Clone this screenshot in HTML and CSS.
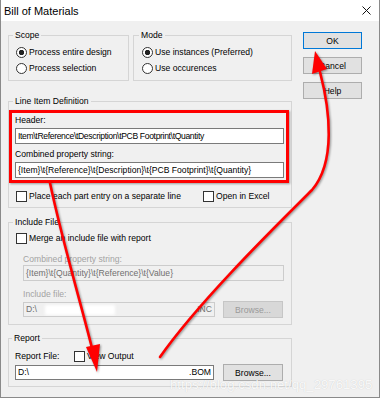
FILE: index.html
```html
<!DOCTYPE html>
<html lang="en">
<head>
    <meta charset="UTF-8">
    <title>Bill of Materials</title>
    <link rel="stylesheet" href="styles.css">
</head>
<body>

<div class="window">
    <div class="titlebar">
        <span class="title">Bill of Materials</span>
        <svg class="close" viewBox="0 0 9 9"><path d="M0.5 0.5L8.5 8.5M8.5 0.5L0.5 8.5" stroke="#111" stroke-width="1"/></svg>
    </div>

    <div class="client">
        <div class="main">
            <div class="top-row">
                <fieldset class="group scope">
                    <legend>Scope</legend>
                    <label class="opt"><input type="radio" name="scope" checked>Process entire design</label>
                    <label class="opt"><input type="radio" name="scope">Process selection</label>
                </fieldset>
                <fieldset class="group mode">
                    <legend>Mode</legend>
                    <label class="opt"><input type="radio" name="mode" checked>Use instances (Preferred)</label>
                    <label class="opt"><input type="radio" name="mode">Use occurences</label>
                </fieldset>
            </div>

            <fieldset class="group lid">
                <legend>Line Item Definition</legend>
                <div class="highlight">
                    <div class="cap">Header:</div>
                    <div class="field tight">Item\tReference\tDescription\tPCB Footprint\tQuantity</div>
                    <div class="cap">Combined property string:</div>
                    <div class="field">{Item}\t{Reference}\t{Description}\t{PCB Footprint}\t{Quantity}</div>
                </div>
                <div class="check-row">
                    <label class="opt wide"><input type="checkbox">Place each part entry on a separate line</label>
                    <label class="opt"><input type="checkbox">Open in Excel</label>
                </div>
            </fieldset>

            <fieldset class="group inc">
                <legend>Include File</legend>
                <label class="opt"><input type="checkbox">Merge an include file with report</label>
                <div class="sub">
                    <div class="cap off first">Combined property string:</div>
                    <div class="field off">{Item}\t{Quantity}\t{Reference}\t{Value}</div>
                    <div class="cap off">Include file:</div>
                    <div class="file-row">
                        <div class="field off inc-path"><span>D:\</span><span class="smudge"></span><span>INC</span></div>
                        <button class="btn" disabled>Browse...</button>
                    </div>
                </div>
            </fieldset>

            <fieldset class="group report">
                <legend>Report</legend>
                <div class="report-head">
                    <span class="report-label">Report File:</span>
                    <label class="opt"><input type="checkbox">View Output</label>
                </div>
                <div class="file-row">
                    <div class="field report-path"><span>D:\</span><span>.BOM</span></div>
                    <button class="btn">Browse...</button>
                </div>
            </fieldset>
        </div>

        <div class="buttons">
            <button class="btn default">OK</button>
            <button class="btn">Cancel</button>
            <button class="btn">Help</button>
        </div>
    </div>

    <svg class="arrows" width="380" height="400" viewBox="0 0 380 400">
        <g fill="none" stroke="#f00" stroke-width="2.6" stroke-linecap="round">
            <path d="M50 183C62 240 80 300 92 348"/>
            <path d="M160 357C200 300 280 222 312 190C336 162 330 110 320 72"/>
        </g>
        <g fill="#f00">
            <polygon points="86,347 100,344 97,372"/>
            <polygon points="312,74 327,69 315,51"/>
        </g>
    </svg>

    <div class="watermark">https://blog.csdn.net/qq_29761395</div>
</div>

</body>
</html>
```

FILE: styles.css
```css
* {
    box-sizing: border-box;
}

body {
    margin: 0;
    background-color: #fff;
    font-family: 'Liberation Sans', Arial, sans-serif;
    font-size: 8.6px;
    color: #000;
}

.window {
    position: relative;
    width: 380px;
    height: 398px;
    background-color: #f0f0f0;
    border: 1px solid #8a8a8a;
    border-top: none;
}

.titlebar {
    height: 21px;
    background-color: #fff;
    display: flex;
    align-items: center;
    justify-content: space-between;
    padding: 0 8px 0 3px;
}

.title {
    font-size: 11px;
}

.close {
    width: 9px;
    height: 9px;
}

.client {
    display: flex;
    padding: 8px 0 0 7px;
}

.main {
    width: 284px;
}

.top-row {
    display: flex;
    gap: 4px;
}

/* group boxes */
.group {
    margin: 0;
    min-width: 0;
    border: 1px solid #d5d5d5;
    padding: 3px 7px 4px;
}

.group legend {
    padding: 0 2px;
    margin-left: -3px;
    line-height: 12px;
}

.scope {
    width: 121px;
}

.mode {
    width: 159px;
    padding-left: 8px;
}

.opt {
    display: flex;
    align-items: center;
    height: 16px;
    white-space: nowrap;
}

.opt input {
    appearance: none;
    -webkit-appearance: none;
    width: 11px;
    height: 11px;
    margin: 0 2px 0 0;
    border: 1px solid #333;
    background-color: #fff;
    flex: none;
}

.opt input[type="radio"] {
    border-radius: 50%;
}

.opt input[type="radio"]:checked {
    background: radial-gradient(circle, #222 2.4px, #fff 3px);
}

.lid {
    margin-top: 14px;
}

.highlight {
    margin: 0 -5px 0 -7px;
    border: 3px solid #f00;
    padding: 1px 2px 2px 3px;
    box-shadow: 1px 1px 2px rgba(0, 0, 0, 0.35);
}

.cap {
    line-height: 12px;
}

.field {
    height: 16px;
    margin-top: 2px;
    padding: 0 2px;
    line-height: 14px;
    background-color: #fff;
    border: 1px solid #7a7a7a;
    white-space: nowrap;
    overflow: hidden;
}

.field.tight {
    letter-spacing: -0.35px;
}

.field + .cap {
    margin-top: 4px;
}

.check-row {
    display: flex;
    align-items: center;
    margin-top: 6px;
}

.check-row .opt {
    height: 14px;
}

.check-row .wide {
    width: 187px;
}

.inc {
    margin-top: 8px;
    padding-bottom: 6px;
}

.inc > .opt {
    height: 14px;
}

.sub {
    margin-left: 7px;
}

.cap.off {
    color: #a3a3a3;
    margin-top: 7px;
}

.cap.off.first {
    margin-top: 8px;
}

.field.off {
    margin-top: 0;
    background-color: #f0f0f0;
    border-color: #cccccc;
    color: #6f6f6f;
}

.file-row {
    display: flex;
    align-items: center;
    gap: 8px;
    height: 17px;
    margin-top: 1px;
}

.file-row .field {
    margin-top: 0;
    height: 15px;
    line-height: 13px;
}

.inc-path {
    width: 192px;
    display: flex;
    align-items: center;
}

.smudge {
    width: 70px;
    height: 10px;
    margin-left: 8px;
    background-color: #fff;
    filter: blur(1.5px);
}

.inc-path span:last-child {
    margin-left: auto;
}

.report {
    margin-top: 7px;
    padding: 5px 6px 5px;
}

.report-head {
    display: flex;
    align-items: center;
    height: 14px;
}

.report-label {
    width: 59px;
}

.report .file-row {
    gap: 9px;
}

.report-path {
    width: 199px;
    display: flex;
    justify-content: space-between;
}

/* buttons */
.buttons {
    display: flex;
    flex-direction: column;
    gap: 8px;
    width: 59px;
    margin: 3px 0 0 11px;
}

.btn {
    height: 17px;
    width: 60px;
    padding: 0;
    font-family: inherit;
    font-size: 8.6px;
    color: #000;
    background-color: #e1e1e1;
    border: 1px solid #adadad;
    flex: none;
}

.buttons .btn {
    width: 59px;
}

.btn.default {
    border-color: #0078d7;
}

.btn:disabled {
    background-color: #d8d8d8;
    border-color: #c6c6c6;
    color: #9a9a9a;
}

/* annotations drawn on top of the screenshot */
.arrows {
    position: absolute;
    top: 0;
    left: -1px;
    pointer-events: none;
    filter: drop-shadow(1px 1px 1px rgba(0, 0, 0, 0.4));
}

.watermark {
    position: absolute;
    left: 169px;
    top: 377px;
    font-size: 13.2px;
    color: rgba(255, 255, 255, 0.9);
    text-shadow: 0 0 1px rgba(0, 0, 0, 0.18);
    white-space: nowrap;
}
```
